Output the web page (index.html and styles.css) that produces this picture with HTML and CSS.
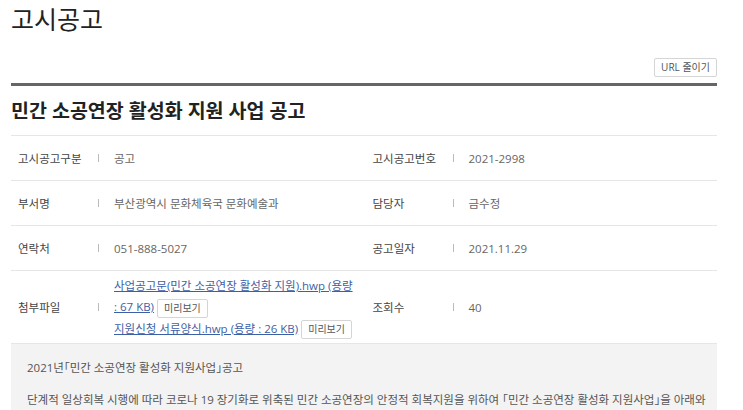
FILE: index.html
```html
<!DOCTYPE html>
<html lang="ko">
<head>
    <meta charset="UTF-8">
    <meta name="viewport" content="width=device-width, initial-scale=1.0">
    <title>고시공고</title>
    <link rel="stylesheet" href="styles.css">
</head>
<body>
    <div id="wrap">
        <h1 class="page-title">고시공고</h1>

        <div class="tools">
            <button type="button" class="btn-small">URL 줄이기</button>
        </div>

        <div class="board-view">
            <h2 class="subject">민간 소공연장 활성화 지원 사업 공고</h2>

            <!-- info table -->
            <div class="info-row">
                <div class="cell">
                    <span class="label">고시공고구분</span>
                    <span class="value">공고</span>
                </div>
                <div class="cell">
                    <span class="label">고시공고번호</span>
                    <span class="value">2021-2998</span>
                </div>
            </div>
            <div class="info-row">
                <div class="cell">
                    <span class="label">부서명</span>
                    <span class="value">부산광역시 문화체육국 문화예술과</span>
                </div>
                <div class="cell">
                    <span class="label">담당자</span>
                    <span class="value">금수정</span>
                </div>
            </div>
            <div class="info-row">
                <div class="cell">
                    <span class="label">연락처</span>
                    <span class="value">051-888-5027</span>
                </div>
                <div class="cell">
                    <span class="label">공고일자</span>
                    <span class="value">2021.11.29</span>
                </div>
            </div>
            <div class="info-row files">
                <div class="cell">
                    <span class="label">첨부파일</span>
                    <span class="value">
                        <a href="#">사업공고문(민간 소공연장 활성화 지원).hwp (용량 :&nbsp;67 KB)</a>
                        <button type="button" class="btn-small">미리보기</button><br>
                        <a href="#">지원신청 서류양식.hwp (용량 : 26 KB)</a>
                        <button type="button" class="btn-small">미리보기</button>
                    </span>
                </div>
                <div class="cell">
                    <span class="label">조회수</span>
                    <span class="value">40</span>
                </div>
            </div>

            <div class="content">
                <p>2021년「민간 소공연장 활성화 지원사업」공고</p>
                <p>단계적 일상회복 시행에 따라 코로나 19 장기화로 위축된 민간 소공연장의 안정적 회복지원을 위하여 「민간 소공연장 활성화 지원사업」을 아래와 같이 공고하오니 많은 신청 바랍니다.</p>
            </div>
        </div>
    </div>
</body>
</html>
```

FILE: styles.css
```css
body {
    margin: 0;
    padding: 0;
    font-family: "Open Sans", "Noto Sans CJK KR", sans-serif;
    font-feature-settings: "halt";
    color: #444;
    background: #fff;
}
#wrap {
    width: 706px;
    padding-left: 11px;
}
.page-title {
    margin: 0;
    padding-top: 2px;
    font-size: 25px;
    font-weight: normal;
    color: #222;
    line-height: 34px;
}
.tools {
    display: flex;
    justify-content: flex-end;
    padding-top: 22px;
    padding-bottom: 6px;
}
.btn-small {
    font-family: inherit;
    font-size: 10px;
    color: #555;
    background: #fff;
    border: 1px solid #d5d5d5;
    border-radius: 2px;
    padding: 0 6px;
    height: 19px;
    line-height: 17px;
    vertical-align: middle;
    cursor: pointer;
}
.board-view {
    border-top: 3px solid #666;
}
.subject {
    margin: 0;
    padding: 11px 0 11px;
    font-size: 19.5px;
    font-weight: bold;
    color: #222;
    line-height: 27px;
    border-bottom: 1px solid #e6e6e6;
}
.info-row {
    display: flex;
    border-bottom: 1px solid #e6e6e6;
    min-height: 44px;
}
.cell {
    flex: 1;
    display: flex;
    align-items: center;
    padding-left: 7px;
    font-size: 11.5px;
}
.cell + .cell {
    padding-left: 10px;
}
.label {
    width: 82px;
    flex-shrink: 0;
    color: #444;
    position: relative;
}
.label::after {
    content: "";
    position: absolute;
    right: 1px;
    top: 50%;
    width: 1px;
    height: 8px;
    margin-top: -4px;
    background: #bbb;
}
.value {
    padding-left: 14px;
    color: #666;
}
.files {
    min-height: 72px;
}
.files .cell:first-child .value {
    padding-top: 4px;
    padding-bottom: 4px;
    line-height: 21px;
    padding-right: 2px;
}
.value a {
    color: #3d5fa6;
}
.content {
    background: #f3f3f3;
    padding: 14px 6px 12px 16px;
    font-size: 11.5px;
    color: #555;
}
.content p {
    margin: 0 0 12px;
    line-height: 20px;
}
```
